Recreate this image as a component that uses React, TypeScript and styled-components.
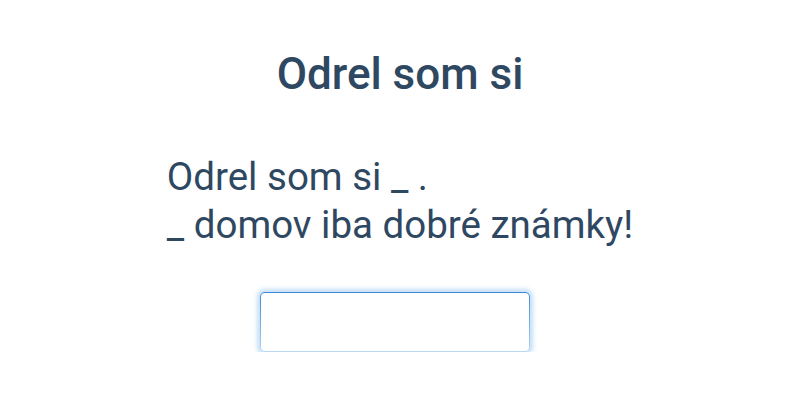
import React from "react";
import styled, { createGlobalStyle } from "styled-components";

const Global = createGlobalStyle`
  html, body { margin: 0; padding: 0; background: #ffffff; }
  body { font-family: Roboto, "Noto Sans", sans-serif; color: #2f4862; }
`;

const Page = styled.main`
  display: flex;
  flex-direction: column;
  align-items: center;
  padding-top: 49px;
`;

const Title = styled.h1`
  margin: 0;
  font-size: 44px;
  font-weight: 500;
  line-height: 50px;
  color: #2f4862;
`;

const Sentence = styled.p`
  margin: 54px 0 0;
  font-size: 38.5px;
  line-height: 48px;
  font-weight: 400;
  color: #2f4862;
  text-align: left;
`;

const Answer = styled.input`
  margin: 43px 10px 0 0;
  width: 270px;
  height: 60px;
  box-sizing: border-box;
  border: 1px solid transparent;
  border-radius: 5px;
  background:
    linear-gradient(#ffffff, #ffffff) padding-box,
    linear-gradient(#3a8bd3, #7fb6e6 60%, #b8d8f3) border-box;
  box-shadow: 0 0 4px 3px rgba(140, 192, 240, 0.5);
  outline: none;
  font-family: Roboto, sans-serif;
  font-size: 24px;
  padding: 0 10px;
`;

export default function App() {
  return (
    <>
      <Global />
      <Page>
        <Title>Odrel som si</Title>
        <Sentence>
          Odrel som si _ .
          <br />
          _ domov iba dobré známky!
        </Sentence>
        <Answer type="text" />
      </Page>
    </>
  );
}
